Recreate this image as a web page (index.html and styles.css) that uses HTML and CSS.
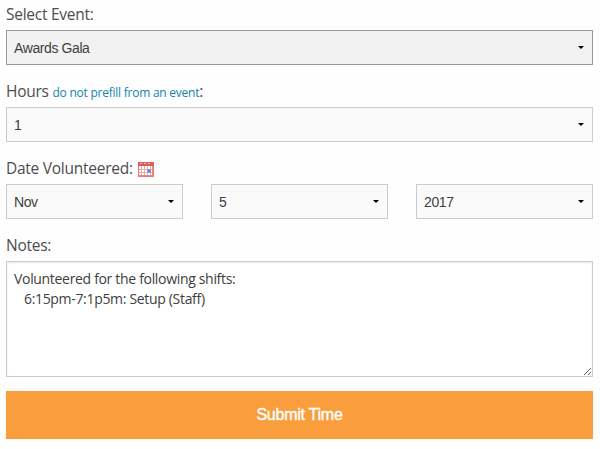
FILE: index.html
```
<!DOCTYPE html>
<html lang="en">
<head>
  <meta charset="UTF-8">
  <title>Submit Time</title>
  <link rel="stylesheet" href="styles.css">
</head>
<body>

  <form class="time-form">
    <label class="label" for="event">Select Event:</label>
    <div class="select-wrap">
      <select id="event" class="select active">
        <option>Awards Gala</option>
      </select>
    </div>

    <label class="label" for="hours">Hours <a class="prefill" href="#">do not prefill from an event</a>:</label>
    <div class="select-wrap">
      <select id="hours" class="select">
        <option>1</option>
      </select>
    </div>

    <label class="label" for="month"><span>Date Volunteered:</span>
      <svg class="calendar" width="16" height="15" viewBox="0 0 16 15">
        <rect x="0.5" y="0.5" width="15" height="14" fill="#fff" stroke="#e08078"/>
        <rect x="0" y="0" width="16" height="4" fill="#d9605a"/>
        <path d="M2 1.5h2M6 1.5h2M10 1.5h2" stroke="#f3b5ae"/>
        <path d="M3.5 4v10M6.5 4v10M9.5 4v10M12.5 4v10M1 7.5h14M1 10.5h14" stroke="#efaaa4"/>
        <path d="M1 13.5h14M14.5 4v10" stroke="#e58b84"/>
        <rect x="9" y="7" width="4" height="4" fill="#8b9be8"/>
        <rect x="10" y="8" width="2" height="2" fill="#5f7be0"/>
      </svg>
    </label>
    <div class="date-row">
      <div class="select-wrap">
        <select id="month" class="select">
          <option>Nov</option>
        </select>
      </div>
      <div class="select-wrap">
        <select class="select">
          <option>5</option>
        </select>
      </div>
      <div class="select-wrap">
        <select class="select">
          <option>2017</option>
        </select>
      </div>
    </div>

    <label class="label" for="notes">Notes:</label>
    <textarea id="notes" class="notes" spellcheck="false">Volunteered for the following shifts:
   6:15pm-7:1p5m: Setup (Staff)</textarea>

    <button class="submit-btn" type="submit">Submit Time</button>
  </form>

</body>
</html>
```
FILE: styles.css
```
* {
    box-sizing: border-box;
}

body {
    margin: 0;
    background-color: #fefefe;
    font-family: "Open Sans", sans-serif;
    color: #4d4d4d;
}

.time-form {
    display: flex;
    flex-direction: column;
    padding: 2px 7px 0 6px;
}

.label {
    display: flex;
    align-items: baseline;
    height: 28px;
    font-size: 15.5px;
    letter-spacing: -0.26px;
    line-height: 24px;
    white-space: pre;
}

.prefill {
    color: #1482ab;
    font-size: 12px;
    letter-spacing: -0.24px;
}

.prefill,
.prefill:hover {
    text-decoration: none;
}

.calendar {
    margin-left: 5px;
    align-self: flex-start;
    margin-top: 6px;
}

.select-wrap {
    position: relative;
    height: 35px;
    margin-bottom: 14px;
}

.select-wrap::after {
    content: "";
    position: absolute;
    top: 16px;
    right: 9px;
    border: 3px solid transparent;
    border-top-color: #000;
    border-bottom: none;
}

.select {
    display: block;
    width: 100%;
    height: 100%;
    padding: 0 7px;
    appearance: none;
    background-color: #fafafa;
    border: 1px solid #ccc;
    border-radius: 0;
    color: #404040;
    font-family: "Liberation Sans", Arial, sans-serif;
    font-size: 14px;
    letter-spacing: -0.4px;
}

.select.active {
    background-color: #f2f2f2;
    border-color: #999;
}

.date-row {
    display: grid;
    grid-template-columns: repeat(3, 1fr);
    gap: 28px;
}

.notes {
    height: 116px;
    padding: 7px;
    background-color: #fff;
    border: 1px solid #ccc;
    border-radius: 0;
    box-shadow: inset 0 1px 2px rgba(0, 0, 0, 0.1);
    color: #404040;
    font-family: "Open Sans", sans-serif;
    font-size: 14px;
    letter-spacing: -0.32px;
    line-height: 20px;
}

.submit-btn {
    height: 48px;
    margin-top: 14px;
    background-color: #fa9d3d;
    border: none;
    color: #fff;
    font-family: "Liberation Sans", Arial, sans-serif;
    font-size: 16px;
    letter-spacing: -0.25px;
    -webkit-text-stroke: 0.4px #fff;
}
```
